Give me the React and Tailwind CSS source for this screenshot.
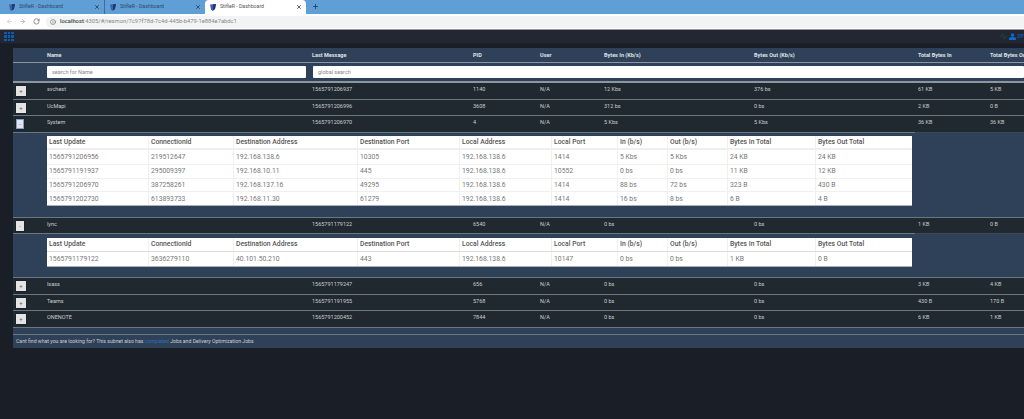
import React from "react";
import { Plus, X, ArrowLeft, ArrowRight, RotateCw, Info, Activity } from "lucide-react";

const COLS = "grid grid-cols-[34px_265px_161px_67px_64px_150px_164px_72px_1fr]";
const INNER = "grid grid-cols-[101px_85px_124px_102px_92px_66px_50px_60px_88px_97px]";
const HEAD = ["Last Update", "ConnectionId", "Destination Address", "Destination Port", "Local Address", "Local Port", "In (b/s)", "Out (b/s)", "Bytes In Total", "Bytes Out Total"];

function Shield() {
  return (
    <svg width="6" height="7" viewBox="0 0 12 14" className="shrink-0">
      <path d="M0 1 L12 0 L10 10 L5 14 L2 11 Z" fill="#3f5fb5" />
      <path d="M6 0.5 L12 0 L10 10 L6 13 Z" fill="#22386f" />
    </svg>
  );
}

function Tab({ className, active }) {
  return (
    <div className={`h-[14px] flex items-center gap-[4px] text-[5.2px] ${active ? "bg-white rounded-t-[4px] text-[#555]" : "text-[#2f4a66]"} ${className}`}>
      <Shield />
      <span className="flex-1 whitespace-nowrap">StifleR - Dashboard</span>
      <X size={6} strokeWidth={3} className="text-[#333]" />
    </div>
  );
}

function Row({ name, msg, pid, inb, outb, tin, tout, open, blue, h }) {
  return (
    <div className={`${COLS} ${h} bg-[#1f292f] text-[5.5px] leading-[7px] text-[#c9ced2]`}>
      <div className="pl-[3px] pt-[3px]">
        <button className={`${open ? "w-[8px]" : "w-[10px]"} h-[10px] flex items-center justify-center bg-[#e4e4e4] text-[#666] text-[6px] leading-none shadow-[0_0_1px_#000] ${blue ? "border border-[#7aa0d8]" : ""}`}>
          {open ? "-" : "+"}
        </button>
      </div>
      <div className="pt-[3px]">{name}</div>
      <div className="pt-[3px]">{msg}</div>
      <div className="pt-[3px]">{pid}</div>
      <div className="pt-[3px]">N/A</div>
      <div className="pt-[3px]">{inb}</div>
      <div className="pt-[3px]">{outb}</div>
      <div className="pt-[3px]">{tin}</div>
      <div className="pt-[3px]">{tout}</div>
    </div>
  );
}

function Line({ open }) {
  return open ? (
    <div className="h-px flex bg-[#3d4a55]">
      <div className="w-[902px] bg-[#6b7780]" />
    </div>
  ) : (
    <div className="h-px bg-[#6b7780]" />
  );
}

function Inner({ rows, single }) {
  return (
    <div className="w-[865px] ml-[34px] bg-white text-[6.8px] border-b border-[#a9b0b6]">
      <div className={`${INNER} h-[14px] items-center font-medium text-[#555] ${single ? "border-b border-[#dcdcdc]" : "border-b-2 border-[#efefef]"}`}>
        {HEAD.map((t, i) => (
          <div key={t} className={`h-full flex items-center pl-[2px] ${i ? "border-l border-[#f0f0f0]" : ""}`}>{t}</div>
        ))}
      </div>
      {rows.map((r, ri) => (
        <div key={ri} className={`${INNER} h-[13.75px] items-center text-[#777] ${ri ? "border-t border-[#f0f0f0]" : ""}`}>
          {r.map((t, i) => (
            <div key={i} className={`h-full flex items-center pl-[2px] ${i ? "border-l border-[#f0f0f0]" : ""}`}>{t}</div>
          ))}
        </div>
      ))}
    </div>
  );
}

export default function App() {
  return (
    <div className="w-[1024px] h-[419px] overflow-hidden bg-[#1a1e27] font-['Roboto',sans-serif] antialiased">
      <div className="h-[14px] bg-[#5f9fd6] flex items-end">
        <Tab className="w-[105px] pl-[9px] pr-[4px] border-r border-[#3f6d96]" />
        <Tab className="w-[100px] pl-[5px] pr-[4px]" />
        <Tab active className="w-[101px] pl-[5px] pr-[4px]" />
        <Plus size={7} strokeWidth={3} className="ml-[6px] mb-[4px] text-[#24415f]" />
      </div>
      <div className="h-[16px] bg-white flex items-center border-b border-[#999]">
        <ArrowLeft size={7} className="ml-[6px] text-[#bbb]" />
        <ArrowRight size={7} className="ml-[6px] text-[#999]" />
        <RotateCw size={7} className="ml-[7px] text-[#555]" />
        <div className="ml-[6px] flex-1 h-[12px] rounded-l-full bg-[#f1f3f4] flex items-center pl-[4px] gap-[4px] text-[5.8px]">
          <Info size={6} className="text-[#555]" />
          <span><span className="text-[#444] font-medium">localhost</span><span className="text-[#888]">:4305/#/resmon/7c97f78d-7c4d-445b-b479-1e884e7abdc1</span></span>
        </div>
      </div>
      <div className="h-[14px] bg-[#222733] border-b border-[#1c2029] flex items-center pl-[4px]">
        <div className="grid grid-cols-3 gap-[1px]">
          {Array.from({ length: 9 }).map((_, i) => (
            <div key={i} className="w-[2.5px] h-[2.5px] bg-[#0a5cad]" />
          ))}
        </div>
        <div className="ml-auto flex items-center">
          <Activity size={7} className="text-[#1f5a30]" />
          <svg width="7" height="7" viewBox="0 0 14 14" className="ml-[2px]">
            <circle cx="7" cy="4" r="3.5" fill="#0a6ad0" />
            <path d="M0 14 V11 C0 9 3 8 7 8 C11 8 14 9 14 11 V14 Z" fill="#0a6ad0" />
          </svg>
          <span className="ml-[1px] text-[5.5px] font-bold text-[#0a5cad] w-[7px] overflow-hidden whitespace-nowrap">2PT</span>
        </div>
      </div>

      <div className="ml-[13px] mt-[4px]">
        <div className={`${COLS} h-[14px] items-center bg-[#2f4159] text-[5.5px] font-bold text-[#dfe3e7] whitespace-nowrap`}>
          <div />
          <div>Name</div>
          <div>Last Message</div>
          <div>PID</div>
          <div>User</div>
          <div>Bytes In (Kb/s)</div>
          <div>Bytes Out (Kb/s)</div>
          <div>Total Bytes In</div>
          <div>Total Bytes Out</div>
        </div>
        <div className="h-px bg-[#8d96a0]" />
        <div className="h-[19px] bg-[#2f4159] flex items-center pl-[34px] gap-[7px] border-b border-[#8d96a0] text-[5.5px] text-[#888]">
          <div className="w-[259px] h-[12px] bg-white rounded-[1px] flex items-center pl-[5px]">search for Name</div>
          <div className="flex-1 h-[12px] bg-white rounded-[1px] flex items-center pl-[5px]">global search</div>
        </div>
        <div className="h-px bg-[#8d96a0]" />
        <Row name="svchest" msg="1565791206937" pid="1140" inb="12 Kbs" outb="376 bs" tin="61 KB" tout="5 KB" h="h-[16px]" />
        <Line />
        <Row name="UcMapi" msg="1565791206996" pid="3608" inb="312 bs" outb="0 bs" tin="2 KB" tout="0 B" h="h-[15px]" />
        <Line />
        <Row name="System" msg="1565791206970" pid="4" inb="5 Kbs" outb="5 Kbs" tin="36 KB" tout="36 KB" h="h-[16px]" open blue />
        <Line open />
        <div className="h-[85px] bg-[#2f4159] pt-[3px] border-b border-[#6b7780]">
          <Inner rows={[
            ["1565791206956", "219512647", "192.168.138.6", "10305", "192.168.138.6", "1414", "5 Kbs", "5 Kbs", "24 KB", "24 KB"],
            ["1565791191937", "295009397", "192.168.10.11", "445", "192.168.138.6", "10552", "0 bs", "0 bs", "11 KB", "12 KB"],
            ["1565791206970", "387258261", "192.168.137.16", "49295", "192.168.138.6", "1414", "88 bs", "72 bs", "323 B", "430 B"],
            ["1565791202730", "613893733", "192.168.11.30", "61279", "192.168.138.6", "1414", "16 bs", "8 bs", "6 B", "4 B"],
          ]} />
        </div>
        <Row name="lync" msg="1565791179122" pid="6540" inb="0 bs" outb="0 bs" tin="1 KB" tout="0 B" h="h-[15px]" open />
        <Line open />
        <div className="h-[44px] bg-[#2f4159] pt-[4px] border-b border-[#6b7780]">
          <Inner single rows={[
            ["1565791179122", "3636279110", "40.101.50.210", "443", "192.168.138.6", "10147", "0 bs", "0 bs", "1 KB", "0 B"],
          ]} />
        </div>
        <Row name="lsass" msg="1565791179247" pid="656" inb="0 bs" outb="0 bs" tin="3 KB" tout="4 KB" h="h-[16px]" />
        <Line />
        <Row name="Teams" msg="1565791191955" pid="5768" inb="0 bs" outb="0 bs" tin="430 B" tout="170 B" h="h-[15px]" />
        <Line />
        <Row name="ONENOTE" msg="1565791200452" pid="7844" inb="0 bs" outb="0 bs" tin="6 KB" tout="1 KB" h="h-[16px]" />
        <Line />
        <div className="h-[6px] bg-[#2f4159]" />
        <Line />
        <div className="h-[13px] bg-[#2f4159] flex items-center pl-[3px] text-[5.15px] text-[#c9ced2]">
          <span>Cant find what you are looking for? This subnet also has <span className="text-[#2c6cb0]">completed</span> Jobs and Delivery Optimization Jobs</span>
        </div>
      </div>
    </div>
  );
}
